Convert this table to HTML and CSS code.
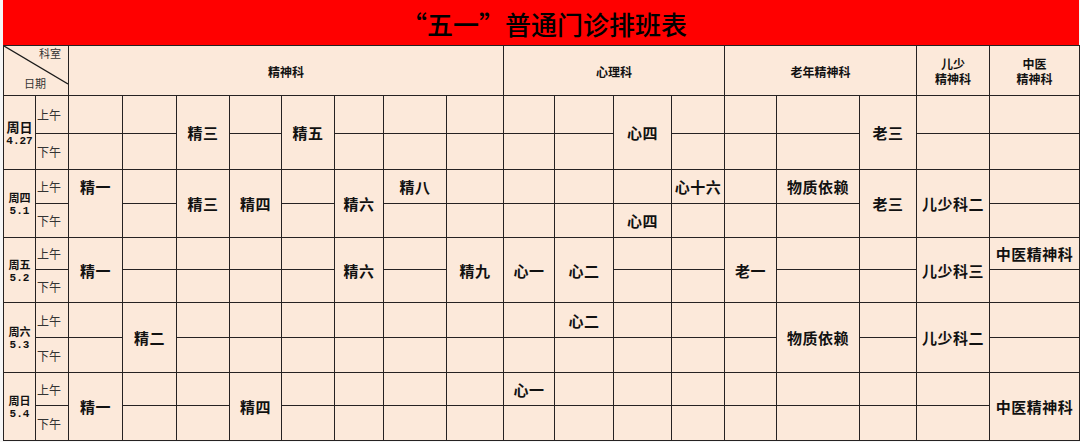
FILE: index.html
```html
<!DOCTYPE html>
<html lang="zh">
<head>
<meta charset="utf-8">
<title>“五一”普通门诊排班表</title>
<link rel="stylesheet" href="styles.css">
</head>
<body>
<div class="sheet">
  <div class="title">“五一”普通门诊排班表</div>
  <div class="grid">
    <!-- header -->
    <div class="cell diag c2">
      <svg class="slash" width="64" height="49" viewBox="0 0 64 49"><line x1="0" y1="0" x2="64" y2="38" stroke="#1a1a1a" stroke-width="1.3"/></svg>
      <span class="k">科室</span>
      <span class="d">日期</span>
    </div>
    <div class="cell hd c8">精神科</div>
    <div class="cell hd c4">心理科</div>
    <div class="cell hd c3">老年精神科</div>
    <div class="cell hd two">儿少<br>精神科</div>
    <div class="cell hd two">中医<br>精神科</div>

    <!-- 周日 4.27 -->
    <div class="cell dt r2"><span class="wd big">周日</span><span class="num">4.27</span></div>
    <div class="cell ap">上午</div>
    <div class="cell"></div><div class="cell"></div>
    <div class="cell tx r2">精三</div>
    <div class="cell"></div>
    <div class="cell tx r2">精五</div>
    <div class="cell"></div><div class="cell"></div><div class="cell"></div><div class="cell"></div><div class="cell"></div>
    <div class="cell tx r2">心四</div>
    <div class="cell"></div><div class="cell"></div><div class="cell"></div>
    <div class="cell tx r2">老三</div>
    <div class="cell"></div><div class="cell"></div>
    <div class="cell ap">下午</div>
    <div class="cell"></div><div class="cell"></div><div class="cell"></div><div class="cell"></div><div class="cell"></div><div class="cell"></div><div class="cell"></div><div class="cell"></div><div class="cell"></div><div class="cell"></div><div class="cell"></div><div class="cell"></div><div class="cell"></div>

    <!-- 周四 5.1 -->
    <div class="cell dt r2"><span class="wd">周四</span><span class="num">5.1</span></div>
    <div class="cell ap">上午</div>
    <div class="cell tx r2 upper">精一</div>
    <div class="cell"></div>
    <div class="cell tx r2">精三</div>
    <div class="cell tx r2">精四</div>
    <div class="cell"></div>
    <div class="cell tx r2">精六</div>
    <div class="cell tx">精八</div>
    <div class="cell"></div><div class="cell"></div><div class="cell"></div><div class="cell"></div>
    <div class="cell tx">心十六</div>
    <div class="cell"></div>
    <div class="cell tx">物质依赖</div>
    <div class="cell tx r2">老三</div>
    <div class="cell tx r2">儿少科二</div>
    <div class="cell"></div>
    <div class="cell ap">下午</div>
    <div class="cell"></div><div class="cell"></div><div class="cell"></div><div class="cell"></div><div class="cell"></div><div class="cell"></div>
    <div class="cell tx">心四</div>
    <div class="cell"></div><div class="cell"></div><div class="cell"></div><div class="cell"></div>

    <!-- 周五 5.2 -->
    <div class="cell dt r2"><span class="wd">周五</span><span class="num">5.2</span></div>
    <div class="cell ap">上午</div>
    <div class="cell tx r2">精一</div>
    <div class="cell"></div><div class="cell"></div><div class="cell"></div><div class="cell"></div>
    <div class="cell tx r2">精六</div>
    <div class="cell"></div>
    <div class="cell tx r2">精九</div>
    <div class="cell tx r2">心一</div>
    <div class="cell tx r2">心二</div>
    <div class="cell"></div><div class="cell"></div>
    <div class="cell tx r2">老一</div>
    <div class="cell"></div><div class="cell"></div>
    <div class="cell tx r2">儿少科三</div>
    <div class="cell tx">中医精神科</div>
    <div class="cell ap">下午</div>
    <div class="cell"></div><div class="cell"></div><div class="cell"></div><div class="cell"></div><div class="cell"></div><div class="cell"></div><div class="cell"></div><div class="cell"></div><div class="cell"></div><div class="cell"></div>

    <!-- 周六 5.3 -->
    <div class="cell dt r2"><span class="wd">周六</span><span class="num">5.3</span></div>
    <div class="cell ap">上午</div>
    <div class="cell"></div>
    <div class="cell tx r2">精二</div>
    <div class="cell"></div><div class="cell"></div><div class="cell"></div><div class="cell"></div><div class="cell"></div><div class="cell"></div><div class="cell"></div>
    <div class="cell tx">心二</div>
    <div class="cell"></div><div class="cell"></div><div class="cell"></div>
    <div class="cell tx r2">物质依赖</div>
    <div class="cell"></div>
    <div class="cell tx r2">儿少科二</div>
    <div class="cell"></div>
    <div class="cell ap">下午</div>
    <div class="cell"></div><div class="cell"></div><div class="cell"></div><div class="cell"></div><div class="cell"></div><div class="cell"></div><div class="cell"></div><div class="cell"></div><div class="cell"></div><div class="cell"></div><div class="cell"></div><div class="cell"></div><div class="cell"></div><div class="cell"></div>

    <!-- 周日 5.4 -->
    <div class="cell dt r2"><span class="wd">周日</span><span class="num">5.4</span></div>
    <div class="cell ap">上午</div>
    <div class="cell tx r2">精一</div>
    <div class="cell"></div><div class="cell"></div>
    <div class="cell tx r2">精四</div>
    <div class="cell"></div><div class="cell"></div><div class="cell"></div><div class="cell"></div>
    <div class="cell tx">心一</div>
    <div class="cell"></div><div class="cell"></div><div class="cell"></div><div class="cell"></div><div class="cell"></div><div class="cell"></div><div class="cell"></div>
    <div class="cell tx r2">中医精神科</div>
    <div class="cell ap">下午</div>
    <div class="cell"></div><div class="cell"></div><div class="cell"></div><div class="cell"></div><div class="cell"></div><div class="cell"></div><div class="cell"></div><div class="cell"></div><div class="cell"></div><div class="cell"></div><div class="cell"></div><div class="cell"></div><div class="cell"></div><div class="cell"></div>
  </div>
</div>
</body>
</html>
```

FILE: styles.css
```css
html, body {
  margin: 0;
  padding: 0;
  background: #f6f6f6;
  font-family: "Noto Sans CJK SC", "Noto Sans", sans-serif;
  color: #111;
}

.sheet {
  margin-left: 3px;
  width: 1077px;
}

.title {
  height: 45px;
  width: 1076px;
  background: #ff0000;
  color: #000;
  font-size: 26px;
  font-weight: 500;
  display: flex;
  align-items: center;
  justify-content: center;
  padding-left: 6px;
  box-sizing: border-box;
  line-height: 1;
  padding-top: 3px;
}

.grid {
  display: grid;
  grid-template-columns: 31px 32px 53px 53px 52px 51px 52px 48px 62px 56px 50px 58px 57px 52px 51px 82px 56px 72px 89px;
  grid-template-rows: 49px 37px 35px 33px 33px 31px 32px 34px 34px 32px 34px;
  gap: 1px;
  padding: 1px;
  background: #262222;
  width: fit-content;
}

.cell {
  background: #fce9da;
  display: flex;
  align-items: center;
  justify-content: center;
  white-space: nowrap;
  overflow: hidden;
}

.c2 { grid-column: span 2; }
.c3 { grid-column: span 3; }
.c4 { grid-column: span 4; }
.c8 { grid-column: span 8; }
.r2 { grid-row: span 2; }

.diag {
  position: relative;
  flex-direction: column;
  align-items: stretch;
  justify-content: space-between;
  padding: 1px 0 5px;
  box-sizing: border-box;
  font-size: 11px;
  color: #333;
  line-height: 13px;
}
.diag .slash {
  position: absolute;
  left: 0;
  top: 0;
}
.diag .k { align-self: flex-end; margin-right: 7px; }
.diag .d { align-self: flex-start; margin-left: 20px; }

.hd {
  font-size: 12px;
  font-weight: 700;
  padding-top: 2px;
}
.hd.two {
  text-align: center;
  line-height: 15px;
  padding-top: 0;
}

.dt {
  flex-direction: column;
  font-weight: 700;
  line-height: 1;
  padding-top: 2px;
}
.dt .wd { font-size: 11px; }
.dt .wd.big { font-size: 13px; }
.dt .num {
  font-family: "Liberation Mono", monospace;
  font-size: 11px;
  margin-top: 3px;
}

.ap {
  justify-content: flex-start;
  font-size: 12px;
  color: #333;
  padding-left: 1px;
}

.tx {
  font-size: 15px;
  font-weight: 700;
  letter-spacing: 0.5px;
}

.upper {
  align-items: flex-start;
  padding-top: 6px;
}
```
